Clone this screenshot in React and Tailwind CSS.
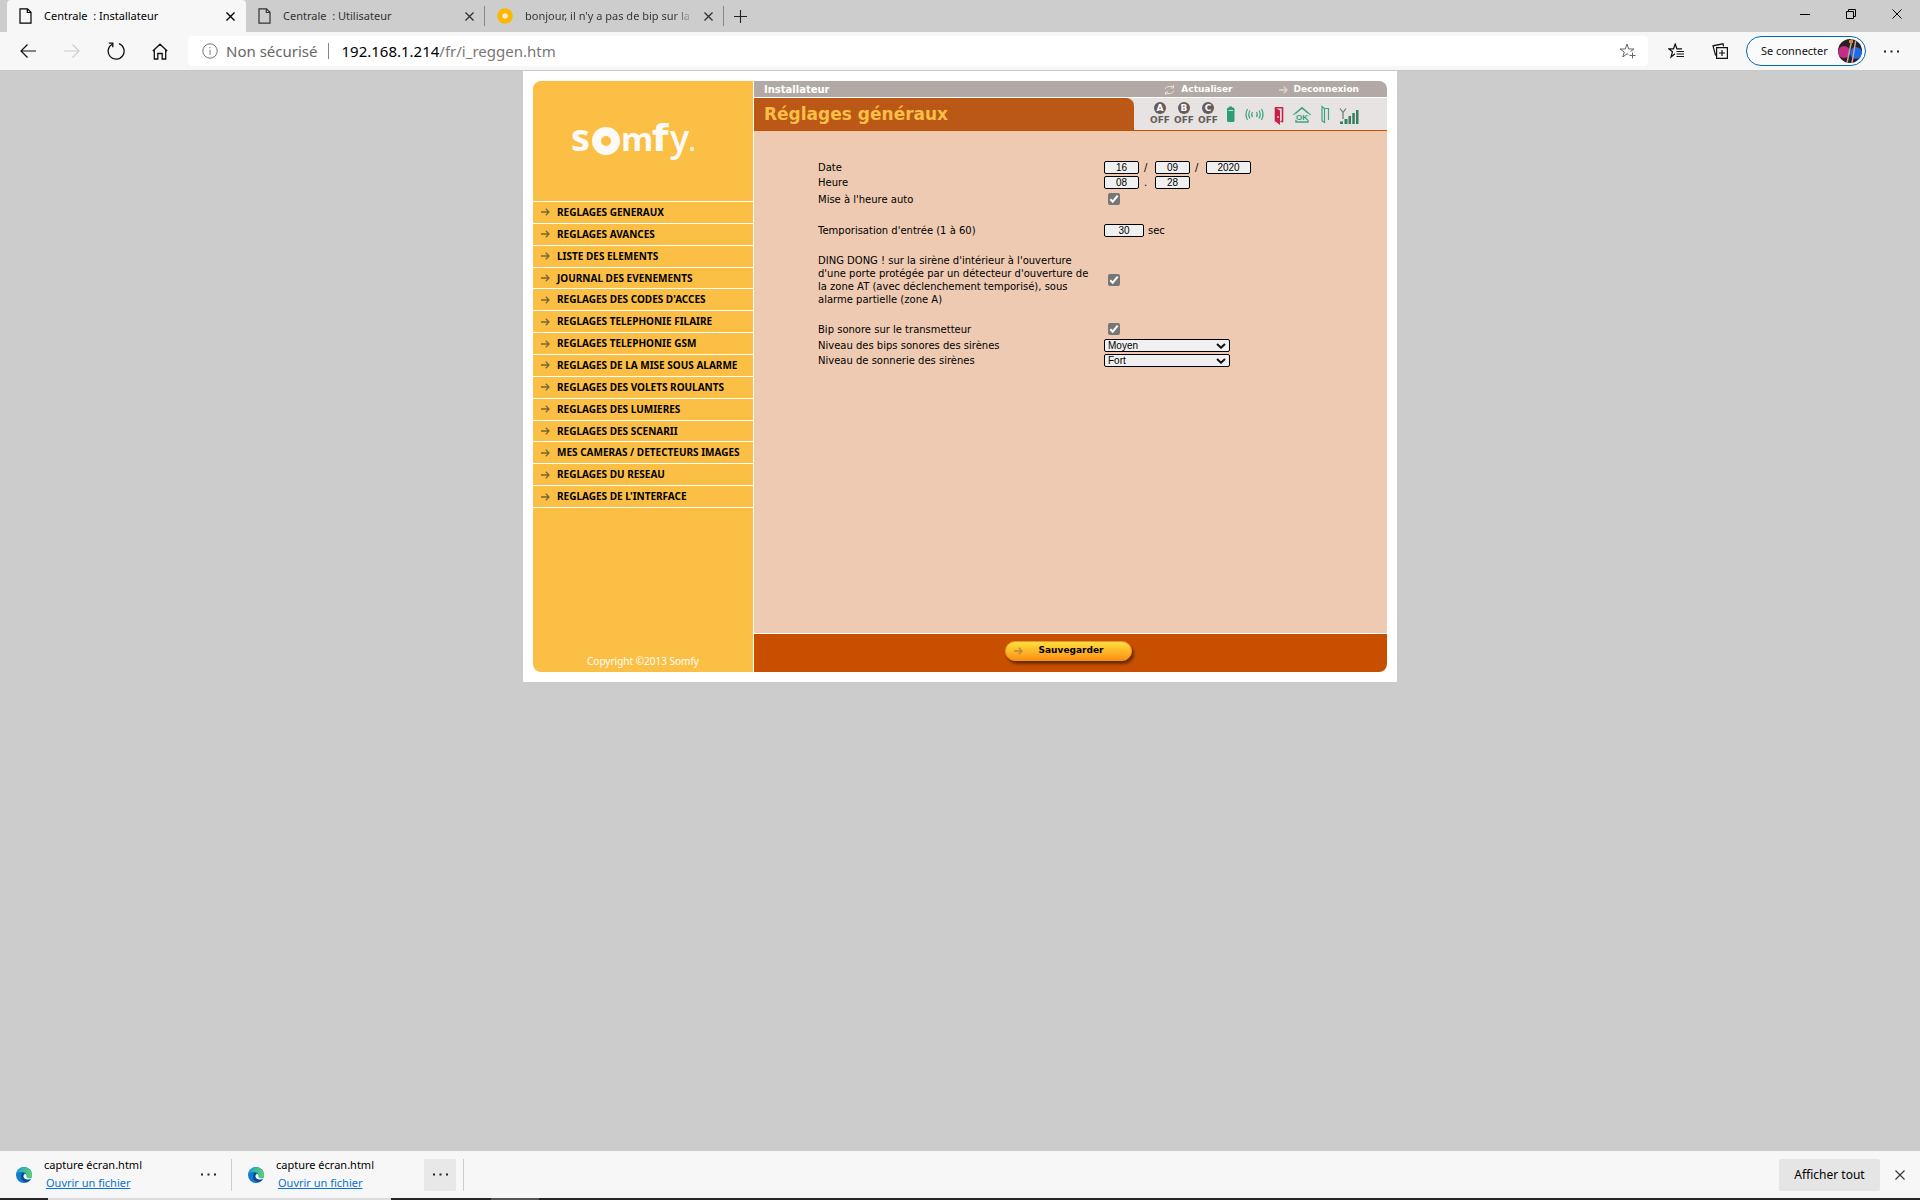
import { useState } from "react";

const tabs = [
  { id: "installer", title: "Centrale  : Installateur", icon: "page" },
  { id: "user", title: "Centrale  : Utilisateur", icon: "page" },
  { id: "forum", title: "bonjour, il n'y a pas de bip sur la", icon: "ring" },
];

const menu = [
  "REGLAGES GENERAUX",
  "REGLAGES AVANCES",
  "LISTE DES ELEMENTS",
  "JOURNAL DES EVENEMENTS",
  "REGLAGES DES CODES D'ACCES",
  "REGLAGES TELEPHONIE FILAIRE",
  "REGLAGES TELEPHONIE GSM",
  "REGLAGES DE LA MISE SOUS ALARME",
  "REGLAGES DES VOLETS ROULANTS",
  "REGLAGES DES LUMIERES",
  "REGLAGES DES SCENARII",
  "MES CAMERAS / DETECTEURS IMAGES",
  "REGLAGES DU RESEAU",
  "REGLAGES DE L'INTERFACE",
];

const Arrow = ({ className }) => (
  <svg viewBox="0 0 9 8" className={`h-2 w-[9px] shrink-0 ${className}`} fill="none" stroke="currentColor" strokeWidth="1.3">
    <path d="M0 4h8M4.8.8 8 4 4.8 7.2" />
  </svg>
);

const Cross = ({ size = 9, width = 1.2 }) => (
  <svg width={size} height={size} viewBox="0 0 10 10" stroke="currentColor" strokeWidth={width}>
    <path d="M.5.5l9 9M9.5.5l-9 9" />
  </svg>
);

const Dots = () => (
  <svg width="15" height="3" viewBox="0 0 15 3" fill="currentColor">
    <path d="M0 .5h2v2H0zM6.500.5h2v2h-2zM13 .5h2v2h-2z" />
  </svg>
);

const TabIcon = ({ type }) =>
  type === "page" ? (
    <svg width="13" height="16" viewBox="0 0 13 16" fill="none" stroke="currentColor" strokeWidth="1.2" className="shrink-0">
      <path d="M1 .8h7.500L12 4.300v10.900H1zM8.300.8v3.700H12" />
    </svg>
  ) : (
    <svg width="16" height="16" viewBox="0 0 16 16" className="shrink-0">
      <circle cx="8" cy="8" r="5.300" fill="#f4ead0" stroke="#fcb800" strokeWidth="5" />
    </svg>
  );

const TabBar = () => {
  const [active, setActive] = useState("installer");
  return (
    <div className="flex h-8 bg-[#cdcdcd] pl-[7px]">
      {tabs.map((tab) => {
        const isActive = tab.id === active;
        return (
          <div
            key={tab.id}
            className={`flex w-[239px] items-center pl-3 ${
              isActive ? "rounded-t bg-[#f7f7f7] text-black" : "text-[#333]"
            }`}
          >
            <button className="flex items-center gap-3" onClick={() => setActive(tab.id)}>
              <TabIcon type={tab.icon} />
              <span
                className={`whitespace-pre text-[11px] ${
                  tab.icon === "ring" ? "bg-gradient-to-r from-[#333] from-90% to-[#aaa] bg-clip-text text-transparent" : ""
                }`}
              >
                {tab.title}
              </span>
            </button>
            <button aria-label="Fermer l'onglet" className="ml-auto flex w-[30px] shrink-0 justify-center">
              <Cross width={1.5} />
            </button>
            <span className={`h-5 w-px ${isActive ? "" : "bg-[#888]"}`} />
          </div>
        );
      })}
      <button aria-label="Nouvel onglet" className="flex w-8 items-center justify-center">
        <svg width="13" height="13" viewBox="0 0 13 13" stroke="#222" strokeWidth="1.1">
          <path d="M6.500 0v13M0 6.500h13" />
        </svg>
      </button>
      <div className="ml-auto flex">
        <button aria-label="Réduire" className="flex h-7 w-[46px] items-center justify-center">
          <span className="h-px w-[10px] bg-black" />
        </button>
        <button aria-label="Restaurer" className="flex h-7 w-[46px] items-center justify-center">
          <svg width="10" height="10" viewBox="0 0 10 10" fill="none" stroke="#000">
            <path d="M.5 2.500h7v7h-7zM2.500 2.500v-2h7v7h-2" />
          </svg>
        </button>
        <button aria-label="Fermer" className="flex h-7 w-[46px] items-center justify-center">
          <Cross size={10} width={1} />
        </button>
      </div>
    </div>
  );
};

const Toolbar = () => (
  <div className="flex h-[39px] items-center border-b border-[#c8c8c8] bg-[#f7f7f7] pl-2">
    <button aria-label="Retour" className="flex w-10 justify-center">
      <svg width="16" height="14" viewBox="0 0 16 14" fill="none" stroke="#111" strokeWidth="1.200">
        <path d="M16 7H1M7.500.5 1 7l6.500 6.500" />
      </svg>
    </button>
    <button aria-label="Suivant" className="ml-1 flex w-10 justify-center">
      <svg width="16" height="14" viewBox="0 0 16 14" fill="none" stroke="#ccc" strokeWidth="1.200">
        <path d="M0 7h15M8.500.5 15 7l-6.500 6.500" />
      </svg>
    </button>
    <button aria-label="Actualiser la page" className="ml-1 flex w-10 justify-center">
      <svg width="18" height="18" viewBox="0 0 18 18" fill="none" stroke="#111" strokeWidth="1.300">
        <path d="M12 1.700A8 8 0 1 1 5.200 2.200M1.800 1.200h4v4" />
      </svg>
    </button>
    <button aria-label="Accueil" className="ml-1 flex w-10 justify-center">
      <svg width="16" height="17" viewBox="0 0 16 17" fill="none" stroke="#111" strokeWidth="1.300">
        <path d="M.8 8 8 1.200 15.200 8M2.300 6.800v9.200h3.500v-5.500h4.400V16h3.500V6.800" />
      </svg>
    </button>
    <div className="ml-2 flex h-[30px] min-w-0 flex-1 items-center rounded bg-white pl-[14px] pr-3 text-[15px] text-[#666]">
      <svg width="16" height="16" viewBox="0 0 16 16" fill="none" stroke="#777">
        <circle cx="8" cy="8" r="7.200" />
        <path d="M8 6.800v5M8 4v1.300" />
      </svg>
      <span className="ml-2 whitespace-nowrap">Non sécurisé</span>
      <span className="ml-[11px] mr-3 h-4 w-px bg-[#888]" />
      <div role="textbox" aria-label="Adresse" contentEditable suppressContentEditableWarning className="flex-1 whitespace-nowrap text-[#777] outline-none">
        <span className="text-black">192.168.1.214</span>/fr/i_reggen.htm
      </div>
      <button aria-label="Ajouter aux favoris">
        <svg width="17" height="17" viewBox="0 0 17 17" fill="none" stroke="#666">
          <path d="M9.500 11.500 8 10.800 3.800 14l1.500-5L1 6h5.300L8 1l1.700 5H15l-3.500 2.500M13.500 9.500v6M10.500 12.500h6" />
        </svg>
      </button>
    </div>
    <button aria-label="Favoris" className="ml-2 flex w-10 justify-center">
      <svg width="16" height="16" viewBox="0 0 16 16" fill="none" stroke="#111" strokeWidth="1.200">
        <path d="M7 10.800 3 14l1.500-5.300L.8 5.800H5.500L7.200 1l1.700 4.800H14M8.500 8.500H16M8.500 11H16M8.500 13.500H16" />
      </svg>
    </button>
    <button aria-label="Collections" className="ml-1 flex w-10 justify-center">
      <svg width="16" height="16" viewBox="0 0 16 16" fill="none" stroke="#111" strokeWidth="1.200">
        <path d="M4.600 4.600h10.800v10.800H4.600zM10 7v6M7 10h6M3.600 12.500 1 2.800 11 .8l.6 2.500" />
      </svg>
    </button>
    <button className="ml-[6px] flex h-[30px] w-[120px] items-center justify-between rounded-full border border-[#0067b8] bg-[#fbfbfb] pl-[14px] pr-[3px] text-[11px] text-[#111]">
      Se connecter
      <svg width="24" height="24" viewBox="0 0 24 24">
        <defs>
          <clipPath id="avatar"><circle cx="12" cy="12" r="12" /></clipPath>
        </defs>
        <g clipPath="url(#avatar)">
          <path fill="#2b2024" d="M0 0h24v24H0z" />
          <circle cx="6" cy="13" r="6" fill="#c72c86" />
          <circle cx="18" cy="14" r="6" fill="#2169e8" />
          <path d="M9 24 14 0M14 24 18 0" stroke="#b9a99f" strokeWidth="1.500" />
          <path d="M11 1h4v3h-4z" fill="#d58a28" />
        </g>
      </svg>
    </button>
    <button aria-label="Paramètres" className="mr-1 flex w-[50px] justify-center text-[#222]">
      <Dots />
    </button>
  </div>
);

const Logo = () => (
  <svg width="126" height="44" viewBox="0 0 126 44" className="overflow-visible" fill="#fdfaf7" fontFamily="'Open Sans', sans-serif" aria-label="somfy">
    <text x="0" y="32" fontSize="38" fontWeight="700">s</text>
    <circle cx="35" cy="22" r="9.500" fill="none" stroke="#fdfaf7" strokeWidth="9" />
    <text x="50" y="32" fontSize="33" fontWeight="700">m</text>
    <text x="81" y="32" fontSize="38" fontWeight="700" fontFamily="'DejaVu Sans', sans-serif">f</text>
    <text x="99" y="32" fontSize="36" fontWeight="600">y</text>
    <circle cx="121" cy="30" r="2.200" opacity=".8" />
  </svg>
);

const Sidebar = () => (
  <nav className="flex w-[220px] shrink-0 flex-col rounded-l-lg bg-[#fbbf45]">
    <div className="flex h-[120px] items-center pl-[38px]">
      <Logo />
    </div>
    <ul className="flex h-[307px] flex-col border-t border-white">
      {menu.map((item) => (
        <li key={item} className="flex-1 border-b border-white">
          <a href="#" className="flex h-full items-center gap-[7px] whitespace-nowrap pl-2 font-['Noto_Sans'] text-[10px] font-bold text-black">
            <Arrow className="text-[#7d6530]" />
            {item}
          </a>
        </li>
      ))}
    </ul>
    <p className="mt-auto pb-1 text-center font-['Noto_Sans'] text-[10px] leading-[14px] text-white">Copyright ©2013 Somfy</p>
  </nav>
);

const Zone = ({ letter }) => (
  <div className="flex w-6 flex-col items-center font-['DejaVu_Sans'] font-bold">
    <span className="flex size-3 items-center justify-center rounded-full bg-[#665c5b] text-[9px] leading-3 text-white">{letter}</span>
    <span className="text-[9px] leading-3 text-[#665c5b]">OFF</span>
  </div>
);

const StatusIcons = () => (
  <div className="flex flex-1 items-center bg-[#e7e3e2] pl-[14px]">
    <Zone letter="A" />
    <Zone letter="B" />
    <Zone letter="C" />
    <svg width="140" height="22" viewBox="0 0 140 22" fill="none">
      <path d="M9 3.500h3V5H9z" fill="#2f9c78" />
      <rect x="7" y="4.500" width="7.500" height="14.500" rx="1.500" fill="#2f9c78" />
      <path d="M8.500 7.500h4.500" stroke="#bfe5d8" />
      <path d="M32.500 9q-1.700 2.500 0 5M30 7.500q-2.500 4 0 8M27.500 6q-3 5.500 0 11M36.500 9q1.700 2.500 0 5M39 7.500q2.500 4 0 8M41.500 6q3 5.500 0 11" stroke="#3da584" strokeWidth="1.200" />
      <path d="M55.500 18.500V4.700h7v13.800h-2" stroke="#c91f48" strokeWidth="1.600" />
      <path d="M55.500 5l4.500 2.500V22l-4.500-3.500z" fill="#c91f48" />
      <path d="M58 13v2" stroke="#fff" />
      <path d="M73.500 12 82 4.800 90.500 12" stroke="#3da584" strokeWidth="1.600" />
      <path d="M76 11v8h12v-8" stroke="#3da584" strokeWidth="1.400" />
      <path d="M74.500 10.800h15v6.200h-15z" fill="#e7e3e2" fillOpacity=".9" />
      <text x="82" y="16.600" fill="#2f9c78" fontFamily="'Liberation Sans', sans-serif" fontWeight="700" fontSize="8" textAnchor="middle">OK</text>
      <path d="M102 3.500V18l2.500 1.500v-14zM104.500 5.500h4V17" stroke="#3da584" strokeWidth="1.200" />
      <path d="M120 5.500l3 4 3-4M123 9v7" stroke="#637e70" strokeWidth="1.200" />
      <path d="M120 18.500h3V21h-3zM124.500 16h3v5h-3zM128.500 13h2.500v8h-2.500zM132.300 10h2.500v11h-2.500zM136 7h2.500v14H136z" fill="#387e61" />
    </svg>
  </div>
);

const PanelHeader = () => (
  <header>
    <div className="flex h-4 items-center rounded-tr-lg bg-[#b2a9a4] pl-[10px] pr-7 pt-px font-['DejaVu_Sans'] text-[9px] font-bold text-white">
      <span className="text-[10px]">Installateur</span>
      <a href="#" className="ml-auto flex items-center gap-[6px]">
        <svg width="11" height="10" viewBox="0 0 11 10" fill="none" stroke="#e3dfdc">
          <path d="M1 4q1-2.500 4-2.500h4.500M9.500 0v3H7M10 5.500Q9 8.500 6 8.500H1.500M1.500 10V7H4" />
        </svg>
        Actualiser
      </a>
      <a href="#" className="ml-[46px] flex items-center gap-[6px]">
        <Arrow className="text-[#dcd6d2]" />
        Deconnexion
      </a>
    </div>
    <div className="mt-px flex h-[33px] border-b border-[#c94f00] bg-[#e7e3e2]">
      <h1 className="flex w-[380px] items-center rounded-tr-lg border-t border-[#c94f00] bg-[#c94f00] bg-[linear-gradient(90deg,#a0684066_1px,transparent_1px),linear-gradient(#a0684066_1px,transparent_1px)] bg-[size:2px_2px] pl-[10px] font-['DejaVu_Sans'] text-[17px] font-bold text-[#fbbf45]">
        Réglages généraux
      </h1>
      <StatusIcons />
    </div>
  </header>
);

const Row = ({ label, htmlFor, className = "h-[15px]", children }) => (
  <div className={`flex items-center ${className}`}>
    <label htmlFor={htmlFor} className="w-[286px] shrink-0 whitespace-nowrap leading-[13px]">
      {label}
    </label>
    {children}
  </div>
);

const Field = ({ id, value, label, className = "w-[35px]" }) => (
  <input
    id={id}
    aria-label={label}
    defaultValue={value}
    className={`h-[13px] rounded-xs border border-black bg-[#f0f0f0] text-center font-['Liberation_Sans'] text-[10px] leading-none ${className}`}
  />
);

const Check = ({ id }) => (
  <span className="ml-1 grid size-3">
    <input id={id} type="checkbox" defaultChecked className="peer col-start-1 row-start-1 size-3 appearance-none rounded-xs bg-white checked:bg-[#767676]" />
    <svg viewBox="0 0 12 12" className="pointer-events-none col-start-1 row-start-1 hidden size-3 peer-checked:block" fill="none" stroke="#fff" strokeWidth="2">
      <path d="M2.300 6.200 4.700 8.700 9.700 2.600" />
    </svg>
  </span>
);

const Choice = ({ id, options, value }) => (
  <span className="grid w-[126px] items-center">
    <select
      id={id}
      defaultValue={value}
      className="col-start-1 row-start-1 h-[13px] w-full appearance-none rounded-xs border border-black bg-[#f0f0f0] pl-[3px] font-['Liberation_Sans'] text-[10px] leading-[11px]"
    >
      {options.map((o) => (
        <option key={o}>{o}</option>
      ))}
    </select>
    <svg width="10" height="6" viewBox="0 0 10 6" className="pointer-events-none col-start-1 row-start-1 mr-1 justify-self-end" fill="none" stroke="#111" strokeWidth="2">
      <path d="M1 1l4 3.700L9 1" />
    </svg>
  </span>
);

const levels = ["Faible", "Moyen", "Fort"];

const SettingsForm = () => (
  <form id="settings" className="min-h-[502px] bg-[#eecab3] pl-16 pt-[29px] font-['DejaVu_Sans'] text-[10px] text-black">
    <Row label="Date" htmlFor="day">
      <Field id="day" value="16" />
      <span className="w-4 pl-[5px]">/</span>
      <Field label="Mois" value="09" />
      <span className="w-4 pl-[5px]">/</span>
      <Field label="Année" value="2020" className="w-[45px]" />
    </Row>
    <Row label="Heure" htmlFor="hour">
      <Field id="hour" value="08" />
      <span className="w-4 pl-[5px]">.</span>
      <Field label="Minutes" value="28" />
    </Row>
    <Row label="Mise à l'heure auto" htmlFor="auto" className="h-[18px]">
      <Check id="auto" />
    </Row>
    <Row label="Temporisation d'entrée (1 à 60)" htmlFor="delay" className="mt-[15px] h-[15px]">
      <Field id="delay" value="30" className="w-10" />
      <span className="pl-1">sec</span>
    </Row>
    <Row
      htmlFor="dingdong"
      className="mt-4 h-[52px]"
      label={
        <>
          DING DONG ! sur la sirène d'intérieur à l'ouverture<br />
          d'une porte protégée par un détecteur d'ouverture de<br />
          la zone AT (avec déclenchement temporisé), sous<br />
          alarme partielle (zone A)
        </>
      }
    >
      <Check id="dingdong" />
    </Row>
    <Row label="Bip sonore sur le transmetteur" htmlFor="beep" className="mt-[14px] h-[18px]">
      <Check id="beep" />
    </Row>
    <Row label="Niveau des bips sonores des sirènes" htmlFor="beepLevel">
      <Choice id="beepLevel" options={levels} value="Moyen" />
    </Row>
    <Row label="Niveau de sonnerie des sirènes" htmlFor="ringLevel">
      <Choice id="ringLevel" options={levels} value="Fort" />
    </Row>
  </form>
);

const EdgeIcon = () => (
  <svg width="16" height="16" viewBox="0 0 16 16" className="shrink-0">
    <defs>
      <linearGradient id="edgeTop" x1="0" y1="0" x2="1" y2="0">
        <stop offset="0" stopColor="#1f9fdc" />
        <stop offset="1" stopColor="#5fd45c" />
      </linearGradient>
    </defs>
    <circle cx="8" cy="8" r="8" fill="#0f7ccc" />
    <path d="M.4 6A8 8 0 0 1 16 8c0 2.500-2 3.500-4 3.300-1.800-.2-2.200-1-1.500-2.200C11 6.500 9 5 6.500 5 4 5 1.500 5.500.4 6z" fill="url(#edgeTop)" />
    <path d="M6.500 5.500c-2.300 2-2.300 7.500 2.500 9.500 2.500.3 4.800-1.200 5.800-3-3 1.500-7 .3-7.300-2.500-.1-1.500.5-2.300 1.300-2.600C8.500 6 7.500 5.500 6.500 5.500z" fill="#114a8b" />
    <path d="M7.500 9.500c.3 2.800 4.300 4 7.500 2.300l.5-1.100c-1.500 1-5.500.8-5-1.200.3-1.300-.3-2.400-1.500-2.600-.8.300-1.600 1.200-1.500 2.600z" fill="#fff" />
  </svg>
);

const Download = ({ highlighted }) => (
  <div className="flex h-8 w-[232px] items-center border-r border-[#ccc] pl-4">
    <EdgeIcon />
    <div className="mb-[2px] ml-3 text-[11px] leading-[18px]">
      <p className="text-black">capture écran.html</p>
      <a href="#" className="ml-[2px] text-[#0b72c9] underline">Ouvrir un fichier</a>
    </div>
    <button
      aria-label="Plus d'options"
      className={`ml-auto mr-[7px] flex size-8 items-center justify-center rounded-xs text-[#222] ${highlighted ? "bg-[#e8e8e8]" : ""}`}
    >
      <Dots />
    </button>
  </div>
);

const DownloadBar = () => (
  <footer className="mt-auto">
    <div className="flex h-[47px] items-center bg-[#f7f7f7]">
      <Download />
      <Download highlighted />
      <button className="ml-auto h-8 w-[101px] rounded-xs bg-[#e5e5e5] text-xs text-black">Afficher tout</button>
      <button aria-label="Fermer la barre" className="flex w-10 justify-center text-[#333]">
        <Cross size={10} width={1.1} />
      </button>
    </div>
    <div className="flex h-[2px] bg-[#26262a]">
      <span className="ml-12 w-[343px] bg-[#dcdcdc]" />
      <span className="ml-[100px] w-12 bg-[#555]" />
    </div>
  </footer>
);

export default function App() {
  return (
    <div className="flex min-h-screen flex-col bg-[#ccc] font-['Noto_Sans',sans-serif]">
      <TabBar />
      <Toolbar />
      <main className="mx-auto w-full max-w-[874px] bg-white p-[10px]">
        <div className="flex">
          <Sidebar />
          <section className="ml-px min-w-0 flex-1">
            <PanelHeader />
            <SettingsForm />
            <div className="mt-px flex h-[38px] items-start justify-center rounded-br-lg bg-[#c94f00] pr-1 pt-[7px]">
              <button
                form="settings"
                type="button"
                className="flex h-5 w-[127px] items-center rounded-full border border-[#e89a20] bg-gradient-to-b from-[#ffdf3c] to-[#fd8f14] pl-2 font-['DejaVu_Sans'] text-[9px] font-bold text-black shadow-[2px_3px_3px_#6b2a00]"
              >
                <Arrow className="text-[#b5883a]" />
                <span className="flex-1 pr-3 text-center">Sauvegarder</span>
              </button>
            </div>
          </section>
        </div>
      </main>
      <DownloadBar />
    </div>
  );
}
